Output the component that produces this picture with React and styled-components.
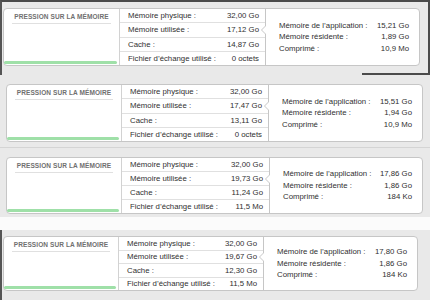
import React from "react";
import styled, { createGlobalStyle } from "styled-components";

const Global = createGlobalStyle`
  html, body { margin: 0; padding: 0; background: #ececec; }
  #root { width: 430px; height: 300px; }
`;

const Page = styled.div`
  width: 430px;
  height: 300px;
  overflow: hidden;
  display: flex;
  flex-direction: column;
  background: #ececec;
  font-family: "Liberation Sans", Arial, sans-serif;
  color: #303030;
`;

const Strip = styled.div`
  flex-shrink: 0;
  box-sizing: border-box;
  height: ${(p) => p.$h}px;
  display: flex;
  flex-direction: column;
  padding: ${(p) => p.$pt}px 0 0 ${(p) => p.$pl}px;
  background: #e9e9e9;
  border-top: ${(p) => (p.$frameTop ? "2px solid #4b4b4b" : "none")};
  border-left: ${(p) => (p.$frameLeft ? "2px solid #555" : "none")};
  border-right: ${(p) => (p.$frameRight ? "2px solid #4b4b4b" : "none")};
  border-bottom: ${(p) => (p.$rule ? "1px solid #d4d4d4" : "none")};
`;

const StripFoot = styled.div`
  margin-top: auto;
  display: flex;
  justify-content: flex-end;
`;

const DarkEdge = styled.div`
  width: 66px;
  height: 2px;
  background: #4b4b4b;
`;

const WhiteBand = styled.div`
  flex-shrink: 0;
  height: 13px;
  background: #fbfbfb;
`;

const Box = styled.div`
  box-sizing: border-box;
  width: ${(p) => p.$w}px;
  height: ${(p) => p.$h}px;
  display: flex;
  background: #fff;
  border: 1px solid #c6c6c6;
  border-radius: 4px;
`;

const Pressure = styled.div`
  box-sizing: border-box;
  width: ${(p) => p.$w}px;
  border-right: 1px solid #d2d2d2;
  display: flex;
  flex-direction: column;
`;

const PressureTitle = styled.div`
  height: 14px;
  margin: 0 8px 0 8px;
  display: flex;
  align-items: center;
  justify-content: center;
  border-bottom: 1px solid #e0e0e0;
  font-size: 6.5px;
  font-weight: bold;
  letter-spacing: 0.1px;
  color: #707070;
  white-space: nowrap;
`;

const GreenBar = styled.div`
  margin: auto 2px 1px 0;
  height: 3px;
  border-radius: 2px;
  background: #9fe0a8;
`;

const Stats = styled.div`
  box-sizing: border-box;
  width: ${(p) => p.$w}px;
  display: flex;
  flex-direction: column;
`;

const StatRow = styled.div`
  flex: 1;
  display: flex;
  align-items: center;
  justify-content: space-between;
  padding: 0 6px 0 8px;
  border-bottom: 1px solid #e0e0e0;
  font-size: 7.8px;
  white-space: nowrap;
  &:last-child {
    border-bottom: none;
  }
`;

const Bubble = styled.div`
  flex: 1;
  position: relative;
  display: flex;
  flex-direction: column;
  justify-content: center;
  padding: 0 10px 0 13px;
  border-left: 1px solid #c6c6c6;
  &::before,
  &::after {
    content: "";
    position: absolute;
    top: calc(37.5% - 4px);
    width: 0;
    height: 0;
    border-top: 4px solid transparent;
    border-bottom: 4px solid transparent;
  }
  &::before {
    left: -5px;
    border-right: 4px solid #c6c6c6;
  }
  &::after {
    left: -4px;
    border-right: 4px solid #fff;
  }
`;

const BubbleRow = styled.div`
  height: 11.5px;
  line-height: 11.5px;
  display: flex;
  justify-content: space-between;
  font-size: 7.8px;
  white-space: nowrap;
`;

const panels = [
  {
    strip: { $h: 75, $pt: 6, $pl: 1, $frameTop: true, $frameLeft: true, $frameRight: true },
    box: { w: 417, h: 58, left: 116, mid: 145 },
    stats: ["32,00 Go", "17,12 Go", "14,87 Go", "0 octets"],
    detail: ["15,21 Go", "1,89 Go", "10,9 Mo"],
    edge: true,
  },
  {
    strip: { $h: 73, $pt: 9, $pl: 6, $rule: true },
    box: { w: 417, h: 58, left: 115, mid: 146 },
    stats: ["32,00 Go", "17,47 Go", "13,11 Go", "0 octets"],
    detail: ["15,51 Go", "1,94 Go", "10,9 Mo"],
  },
  {
    strip: { $h: 69, $pt: 9, $pl: 6 },
    box: { w: 417, h: 57, left: 115, mid: 147 },
    stats: ["32,00 Go", "19,73 Go", "11,24 Go", "11,5 Mo"],
    detail: ["17,86 Go", "1,86 Go", "184 Ko"],
    band: true,
  },
  {
    strip: { $h: 70, $pt: 6, $pl: 1, $frameLeft: true },
    box: { w: 415, h: 55, left: 115, mid: 144 },
    stats: ["32,00 Go", "19,67 Go", "12,30 Go", "11,5 Mo"],
    detail: ["17,80 Go", "1,86 Go", "184 Ko"],
  },
];

const statLabels = [
  "Mémoire physique :",
  "Mémoire utilisée :",
  "Cache :",
  "Fichier d’échange utilisé :",
];

const detailLabels = [
  "Mémoire de l’application :",
  "Mémoire résidente :",
  "Comprimé :",
];

function MemoryPanel({ p }) {
  return (
    <Box $w={p.box.w} $h={p.box.h}>
      <Pressure $w={p.box.left}>
        <PressureTitle>PRESSION SUR LA MÉMOIRE</PressureTitle>
        <GreenBar />
      </Pressure>
      <Stats $w={p.box.mid}>
        {statLabels.map((l, i) => (
          <StatRow key={l}>
            <span>{l}</span>
            <span>{p.stats[i]}</span>
          </StatRow>
        ))}
      </Stats>
      <Bubble>
        {detailLabels.map((l, i) => (
          <BubbleRow key={l}>
            <span>{l}</span>
            <span>{p.detail[i]}</span>
          </BubbleRow>
        ))}
      </Bubble>
    </Box>
  );
}

export default function App() {
  return (
    <>
      <Global />
      <Page>
        {panels.map((p, i) => (
          <React.Fragment key={i}>
            <Strip {...p.strip}>
              <MemoryPanel p={p} />
              {p.edge && (
                <StripFoot>
                  <DarkEdge />
                </StripFoot>
              )}
            </Strip>
            {p.band && <WhiteBand />}
          </React.Fragment>
        ))}
      </Page>
    </>
  );
}
